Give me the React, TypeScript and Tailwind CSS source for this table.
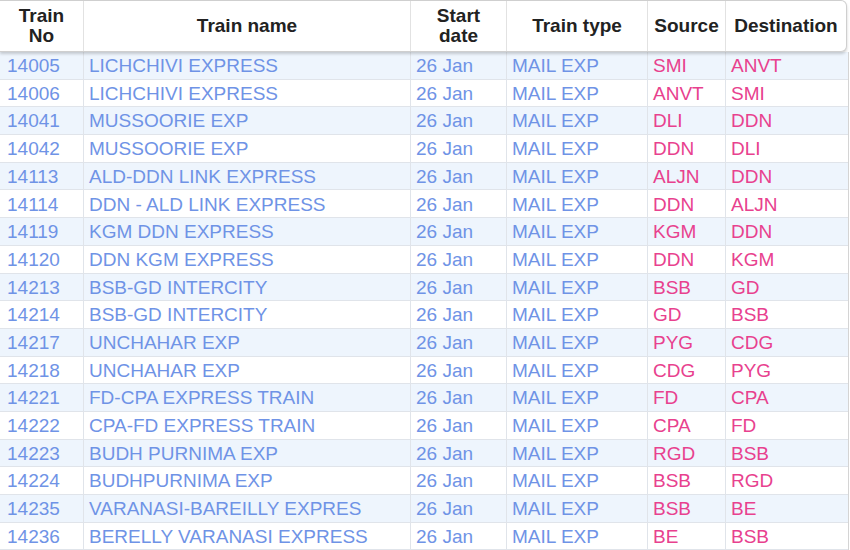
import React from 'react';

type Train = {
    no: string;
    name: string;
    date: string;
    type: string;
    src: string;
    dest: string;
};

const trains: Train[] = [
    { no: '14005', name: 'LICHCHIVI EXPRESS', date: '26 Jan', type: 'MAIL EXP', src: 'SMI', dest: 'ANVT' },
    { no: '14006', name: 'LICHCHIVI EXPRESS', date: '26 Jan', type: 'MAIL EXP', src: 'ANVT', dest: 'SMI' },
    { no: '14041', name: 'MUSSOORIE EXP', date: '26 Jan', type: 'MAIL EXP', src: 'DLI', dest: 'DDN' },
    { no: '14042', name: 'MUSSOORIE EXP', date: '26 Jan', type: 'MAIL EXP', src: 'DDN', dest: 'DLI' },
    { no: '14113', name: 'ALD-DDN LINK EXPRESS', date: '26 Jan', type: 'MAIL EXP', src: 'ALJN', dest: 'DDN' },
    { no: '14114', name: 'DDN - ALD LINK EXPRESS', date: '26 Jan', type: 'MAIL EXP', src: 'DDN', dest: 'ALJN' },
    { no: '14119', name: 'KGM DDN EXPRESS', date: '26 Jan', type: 'MAIL EXP', src: 'KGM', dest: 'DDN' },
    { no: '14120', name: 'DDN KGM EXPRESS', date: '26 Jan', type: 'MAIL EXP', src: 'DDN', dest: 'KGM' },
    { no: '14213', name: 'BSB-GD INTERCITY', date: '26 Jan', type: 'MAIL EXP', src: 'BSB', dest: 'GD' },
    { no: '14214', name: 'BSB-GD INTERCITY', date: '26 Jan', type: 'MAIL EXP', src: 'GD', dest: 'BSB' },
    { no: '14217', name: 'UNCHAHAR EXP', date: '26 Jan', type: 'MAIL EXP', src: 'PYG', dest: 'CDG' },
    { no: '14218', name: 'UNCHAHAR EXP', date: '26 Jan', type: 'MAIL EXP', src: 'CDG', dest: 'PYG' },
    { no: '14221', name: 'FD-CPA EXPRESS TRAIN', date: '26 Jan', type: 'MAIL EXP', src: 'FD', dest: 'CPA' },
    { no: '14222', name: 'CPA-FD EXPRESS TRAIN', date: '26 Jan', type: 'MAIL EXP', src: 'CPA', dest: 'FD' },
    { no: '14223', name: 'BUDH PURNIMA EXP', date: '26 Jan', type: 'MAIL EXP', src: 'RGD', dest: 'BSB' },
    { no: '14224', name: 'BUDHPURNIMA EXP', date: '26 Jan', type: 'MAIL EXP', src: 'BSB', dest: 'RGD' },
    { no: '14235', name: 'VARANASI-BAREILLY EXPRES', date: '26 Jan', type: 'MAIL EXP', src: 'BSB', dest: 'BE' },
    { no: '14236', name: 'BERELLY VARANASI EXPRESS', date: '26 Jan', type: 'MAIL EXP', src: 'BE', dest: 'BSB' },
];

const App: React.FC = () => {
    return (
        <div className="w-[850px] h-[550px] overflow-hidden bg-white font-['Liberation_Sans',Arial,sans-serif]">
            {/* header */}
            <div className="w-[847px] h-[52px] flex bg-white border border-l-0 border-[#cfcfcf] rounded-r-md shadow-[0_2px_3px_rgba(0,0,0,0.18)] text-[19px] font-bold text-[#222] leading-[20px] relative z-10">
                <div className="w-[84px] flex items-center justify-center text-center border-r border-[#e2e2e2]">Train<br />No</div>
                <div className="w-[327px] flex items-center justify-center border-r border-[#e2e2e2]">Train name</div>
                <div className="w-[96px] flex items-center justify-center text-center border-r border-[#e2e2e2]">Start<br />date</div>
                <div className="w-[141px] flex items-center justify-center border-r border-[#e2e2e2]">Train type</div>
                <div className="w-[78px] flex items-center justify-center border-r border-[#e2e2e2]">Source</div>
                <div className="flex-1 flex items-center justify-center">Destination</div>
            </div>

            {/* rows */}
            <div className="w-[849px] border-r border-[#d4d4d4] text-[19px]">
                {trains.map((t, i) => (
                    <div
                        key={t.no}
                        className={`flex h-[27.7px] items-center border-b border-[#e0e4ea] ${i % 2 === 0 ? 'bg-[#eef5fd]' : 'bg-white'}`}
                    >
                        <div className="w-[84px] h-full flex items-center pt-[2px] pl-[7px] text-[#6f93e6] border-r border-[#e0e4ea]">{t.no}</div>
                        <div className="w-[327px] h-full flex items-center pt-[2px] pl-[5px] text-[#6f93e6] border-r border-[#e0e4ea] whitespace-nowrap">{t.name}</div>
                        <div className="w-[96px] h-full flex items-center pt-[2px] pl-[5px] text-[#6f93e6] border-r border-[#e0e4ea]">{t.date}</div>
                        <div className="w-[141px] h-full flex items-center pt-[2px] pl-[5px] text-[#6f93e6] border-r border-[#e0e4ea]">{t.type}</div>
                        <div className="w-[78px] h-full flex items-center pt-[2px] pl-[5px] text-[#e8418e] border-r border-[#e0e4ea]">{t.src}</div>
                        <div className="flex-1 h-full flex items-center pt-[2px] pl-[5px] text-[#e8418e]">{t.dest}</div>
                    </div>
                ))}
            </div>
        </div>
    );
};

export default App;
